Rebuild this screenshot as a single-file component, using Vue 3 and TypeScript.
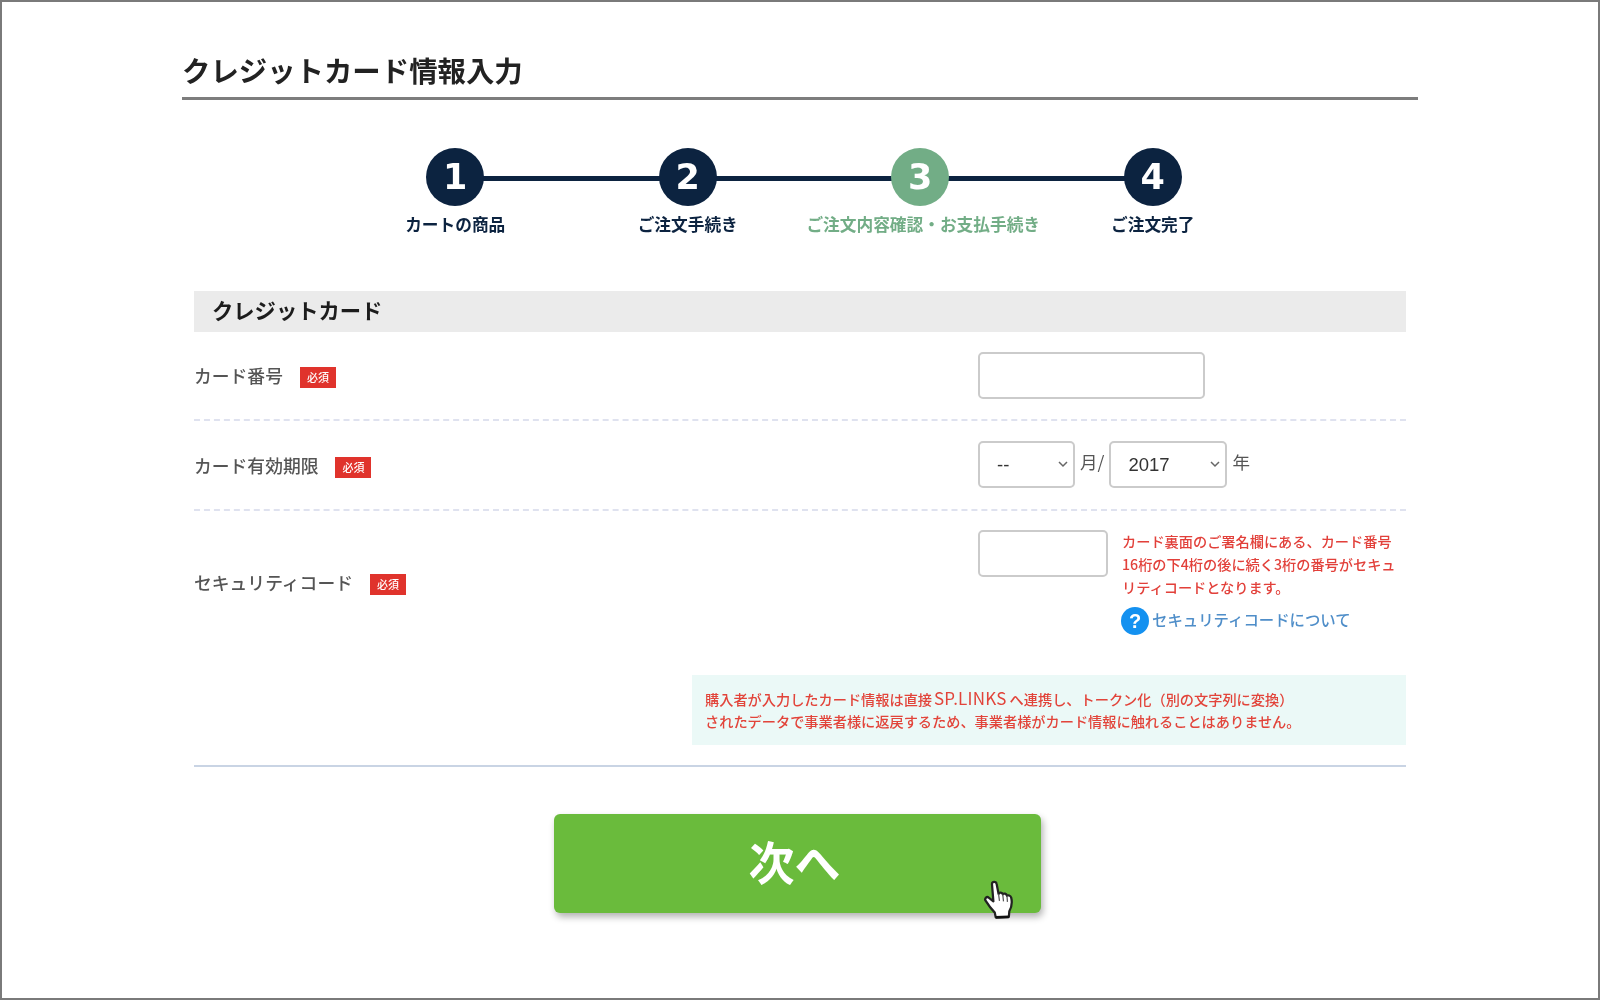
<script setup lang="ts">
interface Step { num: number; label: string; current?: boolean }
const steps: Step[] = [
  { num: 1, label: 'カートの商品' },
  { num: 2, label: 'ご注文手続き' },
  { num: 3, label: 'ご注文内容確認・お支払手続き', current: true },
  { num: 4, label: 'ご注文完了' },
]
</script>

<template>
  <div class="frame">
    <main class="page">
      <h1 class="title">クレジットカード情報入力</h1>

      <ol class="steps">
        <li v-for="s in steps" :key="s.num" class="step" :class="{ current: s.current }">
          <span class="dot">{{ s.num }}</span>
          <span class="step-label">{{ s.label }}</span>
        </li>
      </ol>

      <section class="form">
        <h2 class="section-head">クレジットカード</h2>

        <div class="row row-1">
          <div class="label">カード番号<span class="badge">必須</span></div>
          <div class="value"><input class="input w-number" type="text" /></div>
        </div>

        <div class="row row-2">
          <div class="label">カード有効期限<span class="badge">必須</span></div>
          <div class="value expiry">
            <span class="select w-month">
              <select><option>--</option></select>
              <svg class="chev" viewBox="0 0 12 8"><path d="M2 2l4 4 4-4" /></svg>
            </span>
            <span class="unit">月/</span>
            <span class="select w-year">
              <select><option>2017</option></select>
              <svg class="chev" viewBox="0 0 12 8"><path d="M2 2l4 4 4-4" /></svg>
            </span>
            <span class="unit">年</span>
          </div>
        </div>

        <div class="row-3">
          <div class="label">セキュリティコード<span class="badge">必須</span></div>
          <div class="value security">
            <input class="input w-code" type="text" />
            <div class="help">
              <p class="help-text">カード裏面のご署名欄にある、カード番号<br />16桁の下4桁の後に続く3桁の番号がセキュ<br />リティコードとなります。</p>
              <a class="help-link"><span class="q">?</span>セキュリティコードについて</a>
            </div>
          </div>
        </div>

        <p class="notice">購入者が入力したカード情報は直接<span class="brand">SP.LINKS</span>へ連携し、トークン化（別の文字列に変換）<br />されたデータで事業者様に返戻するため、事業者様がカード情報に触れることはありません。</p>
      </section>

      <div class="actions">
        <button class="next" type="button">
          次へ
          <svg class="hand" viewBox="0 0 32 42">
            <path class="hand-shape" d="M8.5 4.5C8.5 1.5 13 1.5 13.5 4.5L15.5 15C16.5 13 19.5 13 20 15.5C21 14 24 14.5 24.5 17C25.5 16 28.5 16.5 29 19C30 23 29.5 29 27 33.5L26.5 39.5L12.5 40L11.5 35C8 31.5 4 26 1.5 22C0.5 20 3 17 5 19L10 23Z" />
            <path class="hand-line" d="M15.5 15L16.5 22.5M20 15.5L20.8 23M24.5 17L25 23.5" />
            <path class="hand-base" d="M12.5 40L26.5 39.5" />
          </svg>
        </button>
      </div>
    </main>
  </div>
</template>

<style scoped>
.frame {
  box-sizing: border-box;
  width: 1600px;
  height: 1000px;
  border: 2px solid #7a7a7a;
  background: #fff;
  overflow: hidden;
  font-family: "Noto Sans CJK JP", "Noto Sans", sans-serif;
  filter: blur(0.55px);
}
.page {
  width: 1236px;
  margin: 0 auto;
  padding-top: 47px;
}
.title {
  margin: 0;
  height: 48px;
  font-size: 28.4px;
  line-height: 42px;
  font-weight: 700;
  color: #222;
  border-bottom: 3px solid #7d7d7d;
}
.steps {
  list-style: none;
  margin: 0 0 0 157px;
  padding: 48px 0 0;
  display: grid;
  grid-template-columns: repeat(4, 232.5px);
  height: 191px;
  box-sizing: border-box;
}
.step {
  position: relative;
  display: flex;
  flex-direction: column;
  align-items: center;
  gap: 6px;
  color: #0c2340;
}
.step:not(:last-child)::after {
  content: "";
  position: absolute;
  left: 50%;
  top: 28px;
  width: 100%;
  height: 5px;
  background: #0c2340;
}
.dot {
  position: relative;
  z-index: 1;
  width: 58px;
  height: 58px;
  border-radius: 50%;
  background: #0c2340;
  color: #fff;
  font-family: "DejaVu Sans", sans-serif;
  font-size: 35px;
  font-weight: 700;
  line-height: 58px;
  text-align: center;
}
.step-label {
  font-size: 16.7px;
  line-height: 24px;
  font-weight: 700;
  white-space: nowrap;
}
.current { color: #72ad86; }
.current .dot { background: #72ad86; }
.current .step-label { margin-left: 6px; }
.form {
  margin: 0 12px;
  border-bottom: 2px solid #c9d4e4;
  padding-bottom: 20px;
}
.section-head {
  margin: 0;
  height: 41px;
  padding-left: 18px;
  background: #ebebeb;
  font-size: 21.3px;
  line-height: 38px;
  font-weight: 700;
  color: #1c1c1c;
}
.row, .row-3 {
  display: grid;
  grid-template-columns: 784px 1fr;
  align-items: center;
}
.row {
  border-bottom: 2px dashed #dfe2ef;
  box-sizing: border-box;
}
.row-1 { height: 89px; }
.row-2 { height: 89.5px; }
.row-3 { height: 164.5px; }
.label {
  font-size: 17.8px;
  line-height: 26px;
  font-weight: 500;
  color: #555;
  display: flex;
  align-items: center;
  white-space: nowrap;
}
.row-1 .label { margin-top: -1px; }
.row-2 .label { margin-top: 1px; }
.row-3 .label { margin-top: -22px; }
.badge {
  margin-left: 17px;
  margin-top: 5px;
  width: 36px;
  height: 21px;
  background: #e0332c;
  color: #fff;
  font-size: 11px;
  line-height: 21px;
  text-align: center;
  font-weight: 500;
}
.row-3 .badge { margin-top: 6px; }
.row-1 .value { margin-top: -1px; }
.row-2 .value { margin-top: 0; }
.input {
  display: block;
  box-sizing: border-box;
  height: 47px;
  border: 2px solid #cbcbcb;
  border-radius: 5px;
  background: #fff;
  padding: 0;
  outline: none;
}
.w-number { width: 227px; }
.w-code { width: 130px; }
.expiry {
  display: flex;
  align-items: center;
}
.select {
  position: relative;
  display: block;
  box-sizing: border-box;
  height: 47px;
}
.w-month { width: 97px; }
.w-year { width: 118px; }
.select select {
  appearance: none;
  box-sizing: border-box;
  width: 100%;
  height: 100%;
  border: 2px solid #cbcbcb;
  border-radius: 5px;
  background: #fff;
  padding: 0 0 0 17px;
  font-family: "Liberation Sans", sans-serif;
  font-size: 18.5px;
  color: #333;
  outline: none;
}
.chev {
  position: absolute;
  right: 6px;
  top: 19px;
  width: 12px;
  height: 8px;
  fill: none;
  stroke: #666;
  stroke-width: 1.5;
}
.unit {
  font-size: 17.5px;
  line-height: 26px;
  color: #555;
  margin: -5px 5px 0;
}
.security {
  display: flex;
  align-items: flex-start;
  gap: 14px;
  align-self: start;
  padding-top: 19px;
}
.help-text {
  margin: 0;
  font-size: 14.2px;
  line-height: 23px;
  color: #e2403a;
  font-weight: 500;
  white-space: nowrap;
}
.help-link {
  display: flex;
  align-items: center;
  margin: 4px 0 0 -1px;
  font-size: 15.4px;
  line-height: 26px;
  font-weight: 500;
  color: #4f8ec9;
  white-space: nowrap;
}
.q {
  width: 28px;
  height: 28px;
  margin: 4px 3px 0 0;
  border-radius: 50%;
  background: #1491f0;
  color: #fff;
  font-family: "Liberation Sans", sans-serif;
  font-size: 20px;
  line-height: 28px;
  font-weight: 700;
  text-align: center;
}
.notice {
  margin: 0 0 0 498px;
  height: 70px;
  box-sizing: border-box;
  padding: 13px 0 0 13px;
  background: #ebf9f7;
  color: #e2443a;
  font-size: 14.2px;
  line-height: 22.4px;
  font-weight: 500;
  white-space: nowrap;
}
.brand {
  margin: 0 3px 0 2px;
  font-size: 17px;
  line-height: 1;
  font-weight: 400;
  letter-spacing: 0.2px;
}
.actions {
  margin-top: 47px;
  padding-left: 372px;
}
.next {
  position: relative;
  display: block;
  width: 487px;
  height: 99px;
  border: 0;
  border-radius: 6px;
  background: #6abb3c;
  box-shadow: 2px 4px 7px rgba(0, 0, 0, 0.3);
  color: #fff;
  font-family: inherit;
  font-size: 46px;
  font-weight: 700;
  line-height: 88px;
  padding: 0 0 8px;
  text-indent: -6px;
}
.hand {
  position: absolute;
  left: 430px;
  top: 65px;
  width: 30px;
  height: 41px;
}
.hand-shape {
  fill: #fff;
  stroke: #222;
  stroke-width: 2.4;
  stroke-linejoin: round;
}
.hand-line {
  fill: none;
  stroke: #555;
  stroke-width: 1.3;
}
.hand-base {
  fill: none;
  stroke: #111;
  stroke-width: 3;
}
</style>
